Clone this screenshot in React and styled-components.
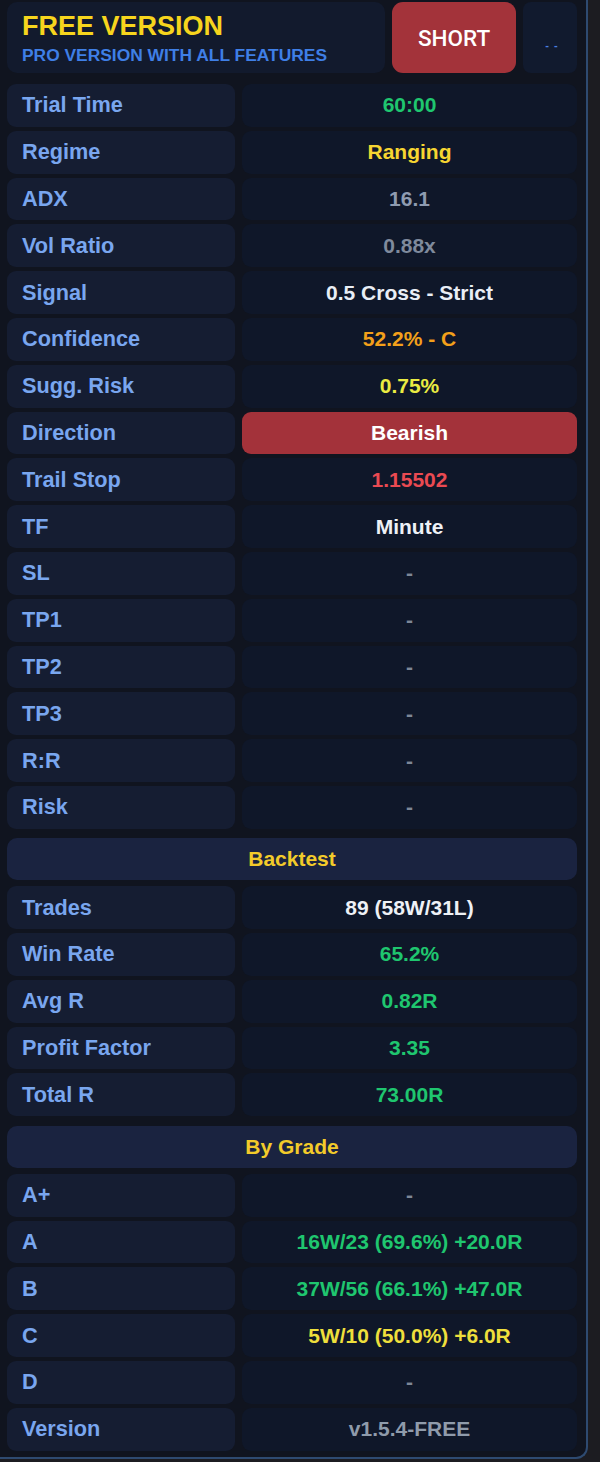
import React from 'react';
import styled, { createGlobalStyle } from 'styled-components';

const Global = createGlobalStyle`
  html, body {
    margin: 0;
    padding: 0;
    background: #1c1c21;
  }
  body {
    font-family: "Liberation Sans", Arial, sans-serif;
  }
`;

const Panel = styled.div`
  width: 588px;
  height: 1459px;
  box-sizing: border-box;
  padding: 2px 9px 0 7px;
  background: #10141f;
  border-right: 2px solid #2e4a70;
  border-bottom: 2px solid #2e4a70;
  border-bottom-right-radius: 12px;
  display: flex;
  flex-direction: column;
`;

const Header = styled.div`
  display: grid;
  grid-template-columns: 378px 124px 54px;
  column-gap: 7px;
  height: 71px;
  margin-bottom: 11px;
`;

const Brand = styled.div`
  background: #121a2d;
  border-radius: 10px;
  padding: 10px 0 0 15px;
  display: flex;
  flex-direction: column;
`;

const Title = styled.div`
  color: #f7d51d;
  font-size: 27px;
  font-weight: 700;
  line-height: 29px;
`;

const Subtitle = styled.div`
  color: #3f7fe6;
  font-size: 17.4px;
  font-weight: 700;
  line-height: 20px;
  margin-top: 4px;
`;

const Badge = styled.div`
  background: #a3333a;
  border-radius: 11px;
  color: #fff;
  font-family: Roboto, "Liberation Sans", sans-serif;
  font-weight: 500;
  font-size: 22.5px;
  display: flex;
  align-items: center;
  justify-content: center;
`;

const Dots = styled.div`
  background: #111a2e;
  border-radius: 8px;
  color: #4a80e0;
  font-size: 11px;
  font-weight: 700;
  letter-spacing: 1px;
  display: flex;
  align-items: center;
  justify-content: center;
  padding: 14px 0 0 4px;
`;

const Rows = styled.div`
  display: flex;
  flex-direction: column;
  gap: 4px;
`;

const Row = styled.div`
  display: grid;
  grid-template-columns: 228px 335px;
  column-gap: 7px;
  height: 42.8px;
`;

const Label = styled.div`
  background: #151d32;
  border-radius: 9px;
  color: #79a6ef;
  font-size: 21.7px;
  font-weight: 700;
  display: flex;
  align-items: center;
  padding-left: 15px;
`;

const Value = styled.div`
  background: ${p => p.$bg || '#0f1729'};
  border-radius: 9px;
  color: ${p => p.$color};
  font-size: 21px;
  font-weight: 700;
  display: flex;
  align-items: center;
  justify-content: center;
`;

const Section = styled.div`
  height: 42px;
  margin: 9.5px 0 6px;
  background: #1a2340;
  border-radius: 10px;
  color: #f3cb2a;
  font-size: 21px;
  font-weight: 700;
  display: flex;
  align-items: center;
  justify-content: center;
`;

const green = '#1fc66f';
const dash = '#7d8797';

const top = [
  ['Trial Time', '60:00', green],
  ['Regime', 'Ranging', '#f6d531'],
  ['ADX', '16.1', '#8e9bb0'],
  ['Vol Ratio', '0.88x', '#7f8a9c'],
  ['Signal', '0.5 Cross - Strict', '#e9eef6'],
  ['Confidence', '52.2% - C', '#f3a01a'],
  ['Sugg. Risk', '0.75%', '#eaec42'],
  ['Direction', 'Bearish', '#ffffff', '#a3323a'],
  ['Trail Stop', '1.15502', '#ea4a52'],
  ['TF', 'Minute', '#eef1f6'],
  ['SL', '-', dash],
  ['TP1', '-', dash],
  ['TP2', '-', dash],
  ['TP3', '-', dash],
  ['R:R', '-', dash],
  ['Risk', '-', dash],
];

const backtest = [
  ['Trades', '89 (58W/31L)', '#eef1f6'],
  ['Win Rate', '65.2%', green],
  ['Avg R', '0.82R', green],
  ['Profit Factor', '3.35', green],
  ['Total R', '73.00R', green],
];

const grades = [
  ['A+', '-', dash],
  ['A', '16W/23 (69.6%) +20.0R', green],
  ['B', '37W/56 (66.1%) +47.0R', green],
  ['C', '5W/10 (50.0%) +6.0R', '#eedf3c'],
  ['D', '-', dash],
  ['Version', 'v1.5.4-FREE', '#8f9bab'],
];

const renderRows = list => (
  <Rows>
    {list.map(([label, value, color, bg]) => (
      <Row key={label}>
        <Label>{label}</Label>
        <Value $color={color} $bg={bg}>{value}</Value>
      </Row>
    ))}
  </Rows>
);

export default function App() {
  return (
    <>
      <Global />
      <Panel>
        <Header>
          <Brand>
            <Title>FREE VERSION</Title>
            <Subtitle>PRO VERSION WITH ALL FEATURES</Subtitle>
          </Brand>
          <Badge>SHORT</Badge>
          <Dots>- -</Dots>
        </Header>
        {renderRows(top)}
        <Section>Backtest</Section>
        {renderRows(backtest)}
        <Section>By Grade</Section>
        {renderRows(grades)}
      </Panel>
    </>
  );
}
